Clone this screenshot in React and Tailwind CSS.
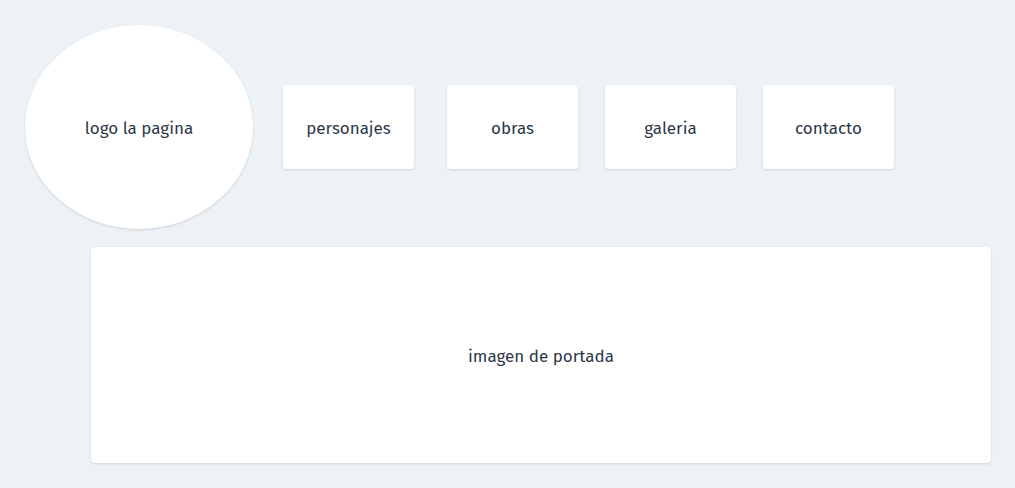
export default function App() {
  const font = { fontFamily: '"Fira Sans", "Noto Sans", "Open Sans", sans-serif' };
  return (
    <div className="min-h-[488px] w-full bg-[#edf2f7] text-[#2d3748] pt-[25px] pl-[25px] pr-[24px]" style={font}>
      <header className="flex items-center">
        <div className="w-[228px] h-[204px] rounded-[50%] bg-white shadow-sm flex items-center justify-center text-[17px] pt-[3px]">
          logo la pagina
        </div>
        <nav className="flex items-center ml-[30px]">
          <a className="w-[131px] h-[84px] bg-white rounded shadow-sm flex items-center justify-center text-[17px] pt-[3px]">personajes</a>
          <a className="w-[131px] h-[84px] bg-white rounded shadow-sm flex items-center justify-center text-[17px] pt-[3px] ml-[33px]">obras</a>
          <a className="w-[131px] h-[84px] bg-white rounded shadow-sm flex items-center justify-center text-[17px] pt-[3px] ml-[27px]">galeria</a>
          <a className="w-[131px] h-[84px] bg-white rounded shadow-sm flex items-center justify-center text-[17px] pt-[3px] ml-[27px]">contacto</a>
        </nav>
      </header>
      <main className="mt-[18px] ml-[66px] w-[900px] h-[216px] bg-white rounded shadow-sm flex items-center justify-center text-[17px] pt-[3px]">
        imagen de portada
      </main>
    </div>
  );
}
